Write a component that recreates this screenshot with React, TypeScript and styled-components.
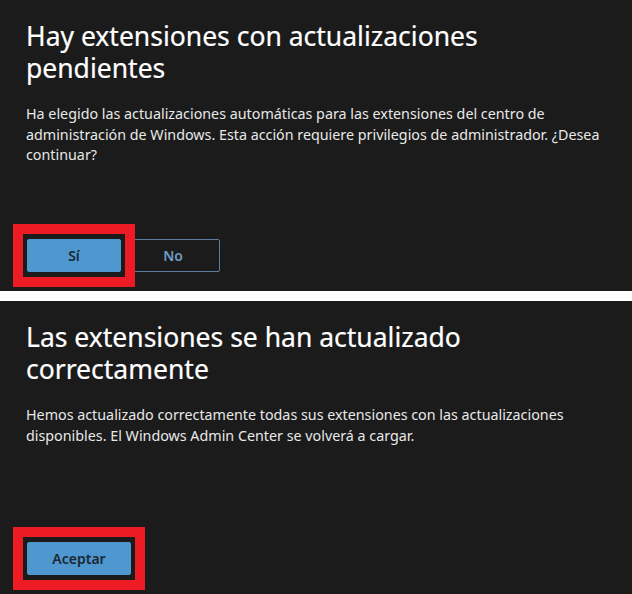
import React from 'react';
import styled, { createGlobalStyle } from 'styled-components';

const GlobalStyle = createGlobalStyle`
  html, body {
    margin: 0;
    padding: 0;
    background: #ffffff;
  }

  body {
    font-family: 'Noto Sans', 'Open Sans', sans-serif;
  }
`;

const Page = styled.div`
  width: 632px;
  display: flex;
  flex-direction: column;
  gap: 10px;
`;

const Dialog = styled.section<{ $height: number }>`
  height: ${(p) => p.$height}px;
  box-sizing: border-box;
  background-color: #1b1b1b;
  padding: 20px 20px 19px 26px;
  display: flex;
  flex-direction: column;
`;

const Title = styled.h1`
  margin: 0;
  max-width: 500px;
  font-size: 26.5px;
  line-height: 32px;
  font-weight: 400;
  color: #ffffff;
  -webkit-text-stroke: 0.2px #ffffff;
`;

const Message = styled.p`
  margin: 20px 0 0;
  max-width: 585px;
  font-size: 14.3px;
  line-height: 20.5px;
  color: #e8e8e8;
`;

const Footer = styled.div`
  margin-top: auto;
  padding-left: 1px;
  display: flex;
  gap: 5px;
`;

const Highlight = styled.div`
  position: relative;
  display: flex;
`;

const RedFrame = styled.span`
  position: absolute;
  top: -15px;
  bottom: -15px;
  left: -14px;
  right: -14px;
  border: 10px solid #ed1c24;
  pointer-events: none;
`;

const Button = styled.button<{ $primary?: boolean; $width: number }>`
  width: ${(p) => p.$width}px;
  height: 33px;
  box-sizing: border-box;
  border-radius: 2px;
  font-family: 'Noto Sans', 'Open Sans', sans-serif;
  font-size: 14px;
  font-weight: 600;
  cursor: pointer;
  background-color: ${(p) => (p.$primary ? '#4f97cf' : 'transparent')};
  color: ${(p) => (p.$primary ? '#1c2733' : '#6f9cc6')};
  border: 1px solid ${(p) => (p.$primary ? '#4f97cf' : '#5d7e9d')};
`;

export default function App() {
  return (
    <>
      <GlobalStyle />
      <Page>
        <Dialog $height={291}>
          <Title>Hay extensiones con actualizaciones pendientes</Title>
          <Message>
            Ha elegido las actualizaciones automáticas para las extensiones del centro de
            administración de Windows. Esta acción requiere privilegios de administrador. ¿Desea
            continuar?
          </Message>
          <Footer>
            <Highlight>
              <Button $primary $width={94}>Sí</Button>
              <RedFrame />
            </Highlight>
            <Button $width={94}>No</Button>
          </Footer>
        </Dialog>
        <Dialog $height={293}>
          <Title>Las extensiones se han actualizado correctamente</Title>
          <Message>
            Hemos actualizado correctamente todas sus extensiones con las actualizaciones
            disponibles. El Windows Admin Center se volverá a cargar.
          </Message>
          <Footer>
            <Highlight>
              <Button $primary $width={104}>Aceptar</Button>
              <RedFrame />
            </Highlight>
          </Footer>
        </Dialog>
      </Page>
    </>
  );
}
